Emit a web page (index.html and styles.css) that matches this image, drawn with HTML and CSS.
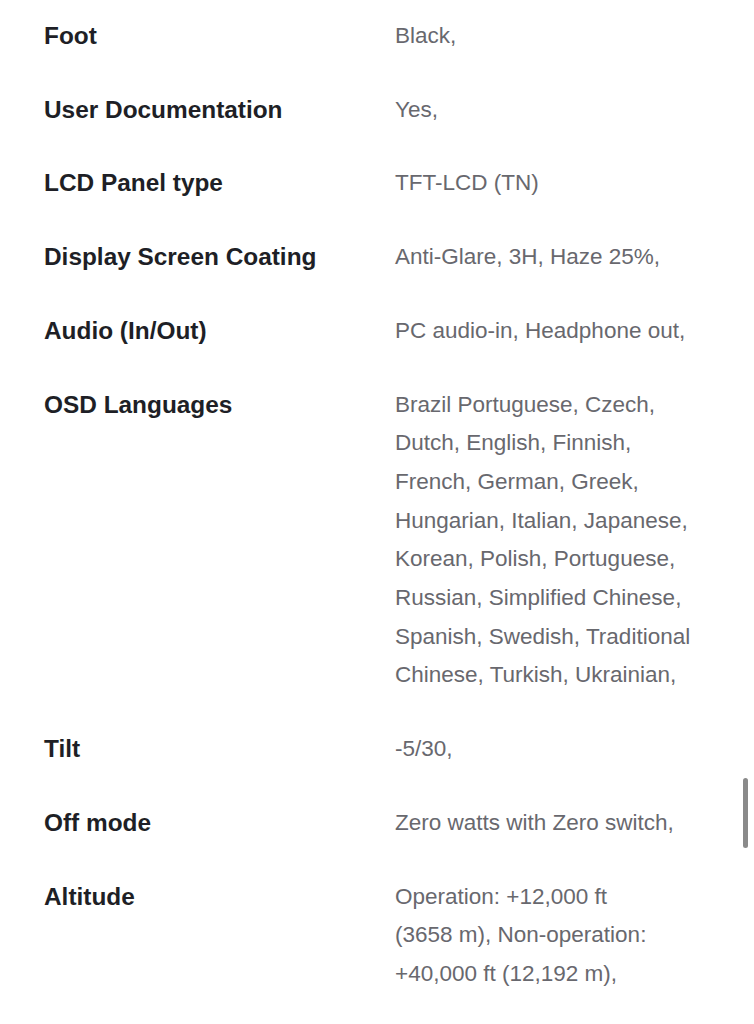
FILE: index.html
```html
<!DOCTYPE html>
<html lang="en">
<head>
<meta charset="utf-8">
<title>Specifications</title>
<link rel="stylesheet" href="styles.css">
</head>
<body>
<dl class="specs">
  <div class="row"><dt>Foot</dt><dd>Black,</dd></div>
  <div class="row"><dt>User Documentation</dt><dd>Yes,</dd></div>
  <div class="row"><dt>LCD Panel type</dt><dd>TFT-LCD (TN)</dd></div>
  <div class="row"><dt>Display Screen Coating</dt><dd>Anti-Glare, 3H, Haze 25%,</dd></div>
  <div class="row"><dt>Audio (In/Out)</dt><dd>PC audio-in, Headphone out,</dd></div>
  <div class="row"><dt>OSD Languages</dt><dd>Brazil Portuguese, Czech, Dutch, English, Finnish, French, German, Greek, Hungarian, Italian, Japanese, Korean, Polish, Portuguese, Russian, Simplified Chinese, Spanish, Swedish, Traditional Chinese, Turkish, Ukrainian,</dd></div>
  <div class="row"><dt>Tilt</dt><dd>-5/30,</dd></div>
  <div class="row"><dt>Off mode</dt><dd>Zero watts with Zero switch,</dd></div>
  <div class="row"><dt>Altitude</dt><dd>Operation: +12,000&nbsp;ft (3658&nbsp;m), Non-operation: +40,000&nbsp;ft (12,192&nbsp;m),</dd></div>
</dl>
<div class="scrollbar"></div>
</body>
</html>
```

FILE: styles.css
```css
html, body {
  margin: 0;
  padding: 0;
  background: #ffffff;
}
body {
  font-family: "Liberation Sans", Arial, sans-serif;
  padding: 17px 0 0 44px;
  overflow: hidden;
  height: 1024px;
  box-sizing: border-box;
}
.specs {
  margin: 0;
  display: flex;
  flex-direction: column;
  gap: 35px;
}
.row {
  display: grid;
  grid-template-columns: 351px 306px;
}
dt {
  font-weight: 700;
  font-size: 24.4px;
  line-height: 38.7px;
  color: #1e1f26;
}
dd {
  margin: 0;
  font-size: 22.5px;
  line-height: 38.7px;
  color: #68686e;
}
.scrollbar {
  position: absolute;
  left: 743px;
  top: 778px;
  width: 5px;
  height: 70px;
  border-radius: 3px;
  background: #8a8a8a;
}
```
